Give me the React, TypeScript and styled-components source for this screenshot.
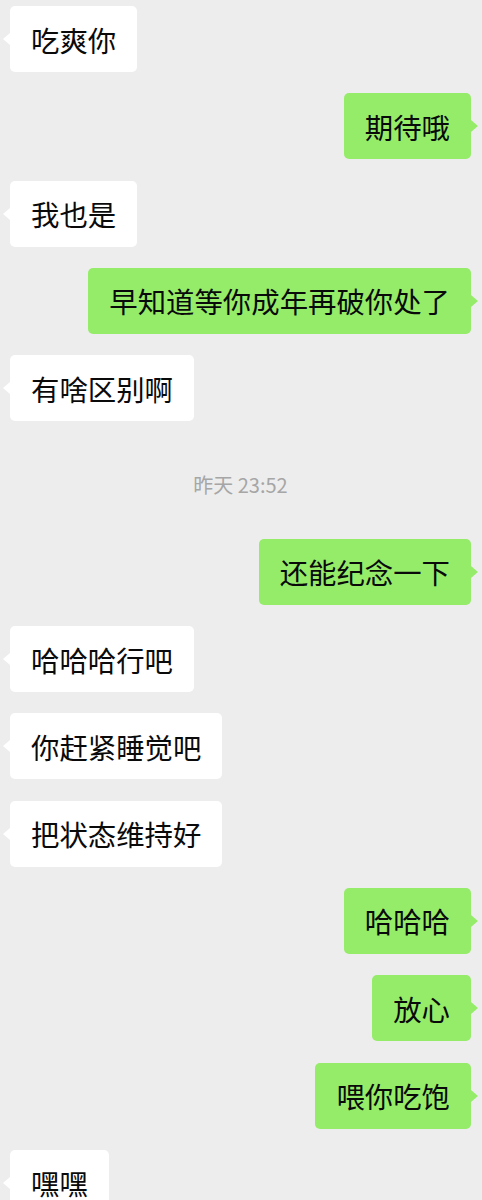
import React from 'react';
import styled, { createGlobalStyle, css } from 'styled-components';

type Item =
  | { kind: 'msg'; side: 'left' | 'right'; text: string }
  | { kind: 'time'; text: string };

const items: Item[] = [
  { kind: 'msg', side: 'left', text: '吃爽你' },
  { kind: 'msg', side: 'right', text: '期待哦' },
  { kind: 'msg', side: 'left', text: '我也是' },
  { kind: 'msg', side: 'right', text: '早知道等你成年再破你处了' },
  { kind: 'msg', side: 'left', text: '有啥区别啊' },
  { kind: 'time', text: '昨天 23:52' },
  { kind: 'msg', side: 'right', text: '还能纪念一下' },
  { kind: 'msg', side: 'left', text: '哈哈哈行吧' },
  { kind: 'msg', side: 'left', text: '你赶紧睡觉吧' },
  { kind: 'msg', side: 'left', text: '把状态维持好' },
  { kind: 'msg', side: 'right', text: '哈哈哈' },
  { kind: 'msg', side: 'right', text: '放心' },
  { kind: 'msg', side: 'right', text: '喂你吃饱' },
  { kind: 'msg', side: 'left', text: '嘿嘿' },
];

/* ---------------------------------------------------------------------- */

export default function App() {
  return (
    <>
      <GlobalStyle />
      <Chat>
        {items.map((item, i) =>
          item.kind === 'time' ? (
            <TimeStamp key={i}>{item.text}</TimeStamp>
          ) : (
            <Row key={i} $side={item.side}>
              <Bubble $side={item.side}>{item.text}</Bubble>
            </Row>
          )
        )}
      </Chat>
    </>
  );
}

/* ---------------------------------------------------------------------- */

const GlobalStyle = createGlobalStyle`
  html, body {
    margin: 0;
    padding: 0;
    background: #ededed;
  }
`;

const Chat = styled.div`
  display: flex;
  flex-direction: column;
  gap: 21.3px;
  height: 1200px;
  overflow: hidden;
  padding: 6px 11px 0 10px;
  box-sizing: border-box;
  background: #ededed;
  font-family: 'Noto Sans CJK SC', 'Noto Sans', sans-serif;
`;

const Row = styled.div<{ $side: 'left' | 'right' }>`
  display: flex;
  justify-content: ${(p) => (p.$side === 'left' ? 'flex-start' : 'flex-end')};
  flex-shrink: 0;
`;

const Bubble = styled.div<{ $side: 'left' | 'right' }>`
  position: relative;
  display: flex;
  align-items: center;
  height: 66px;
  padding: 0 21px;
  border-radius: 5px;
  font-size: 28.4px;
  color: #0a0a0a;
  white-space: nowrap;
  background: ${(p) => (p.$side === 'left' ? '#ffffff' : '#95ec69')};

  &::before {
    content: '';
    position: absolute;
    top: 27px;
    border-top: 6px solid transparent;
    border-bottom: 6px solid transparent;
    ${(p) =>
      p.$side === 'left'
        ? css`
            left: -7px;
            border-right: 7px solid #ffffff;
          `
        : css`
            right: -7px;
            border-left: 7px solid #95ec69;
          `}
  }
`;

const TimeStamp = styled.div`
  flex-shrink: 0;
  height: 75px;
  padding-top: 30px;
  box-sizing: border-box;
  text-align: center;
  font-size: 20px;
  line-height: 26px;
  color: #a6a6a6;
`;
